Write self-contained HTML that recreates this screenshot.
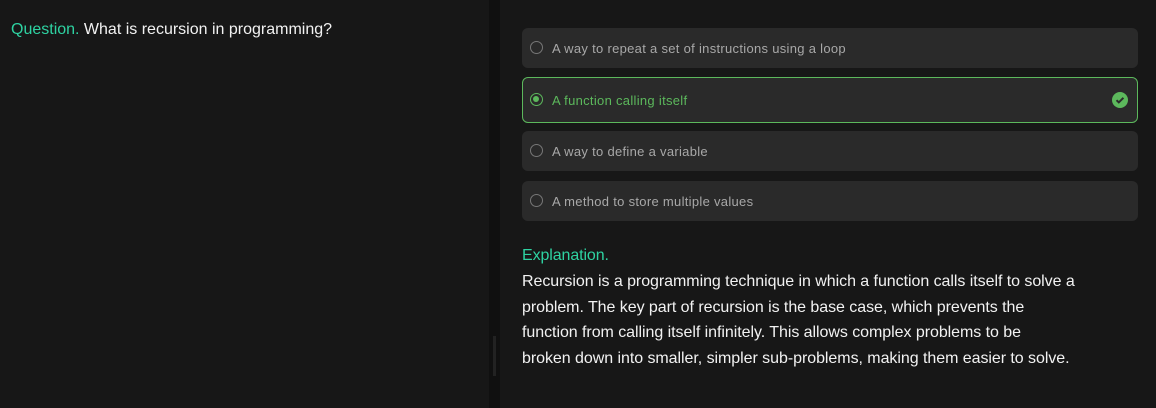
<!DOCTYPE html>
<html><head><meta charset="utf-8"><style>
*{margin:0;padding:0;box-sizing:border-box}
body{width:1156px;height:408px;overflow:hidden;background:#171717;font-family:"Liberation Sans",sans-serif;position:relative}
.left{position:absolute;left:0;top:0;width:489px;height:408px;background:#171717}
.q{position:absolute;left:11px;top:21px;font-size:16px;color:#f2f2f2;letter-spacing:0px}
.q span{color:#2ed3a2}
.div{position:absolute;left:489px;top:0;width:11px;height:408px;background:#101010}
.handle{position:absolute;left:493px;top:336px;width:3px;height:40px;background:#222}
.card{position:absolute;left:522px;width:616px;background:#2a2a2a;border-radius:6px;color:#a8a8a8;font-size:13px;letter-spacing:0.3px}
.card .r{position:absolute;left:8px;width:13px;height:13px;border:1.5px solid #777;border-radius:50%}
.card .t{position:absolute;left:30px}
.sel{border:1px solid #5cb85c;color:#5cb85c}
.sel .r{border-color:#5cb85c}
.sel .r::after{content:"";position:absolute;left:2px;top:2px;width:6px;height:6px;border-radius:50%;background:#5cb85c}
.ex{position:absolute;left:522px;top:247px;font-size:16px;color:#2ed3a2;letter-spacing:-0.1px}
.p{position:absolute;left:522px;top:269px;width:600px;font-size:16px;line-height:25.7px;color:#f2f2f2;letter-spacing:-0.05px}
</style></head><body>
<div class="left"></div>
<div class="q"><span>Question.</span> What is recursion in programming?</div>
<div class="div"></div><div class="handle"></div>
<div class="card" style="top:28px;height:40px"><div class="r" style="top:13px"></div><div class="t" style="top:13px">A way to repeat a set of instructions using a loop</div></div>
<div class="card sel" style="top:77px;height:46px"><div class="r" style="top:15px;left:7px"></div><div class="t" style="top:15px;left:29px">A function calling itself</div>
<svg style="position:absolute;left:589px;top:14px" width="16" height="16" viewBox="0 0 16 16"><circle cx="8" cy="8" r="8" fill="#5cb85c"/><path d="M4.5 8.2l2.3 2.2 4.6-4.6" stroke="#2a2a2a" stroke-width="2" fill="none"/></svg></div>
<div class="card" style="top:131px;height:40px"><div class="r" style="top:13px"></div><div class="t" style="top:13px">A way to define a variable</div></div>
<div class="card" style="top:181px;height:40px"><div class="r" style="top:13px"></div><div class="t" style="top:13px">A method to store multiple values</div></div>
<div class="ex">Explanation.</div>
<div class="p">Recursion is a programming technique in which a function calls itself to solve a<br>problem. The key part of recursion is the base case, which prevents the<br>function from calling itself infinitely. This allows complex problems to be<br>broken down into smaller, simpler sub-problems, making them easier to solve.</div>
</body></html>
